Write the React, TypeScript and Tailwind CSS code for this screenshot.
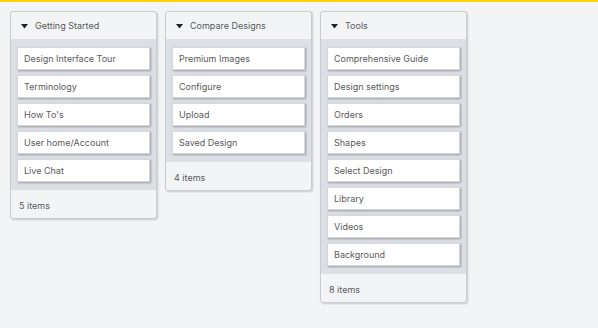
const groups = [
  {
    title: "Getting Started",
    items: ["Design Interface Tour", "Terminology", "How To's", "User home/Account", "Live Chat"],
  },
  {
    title: "Compare Designs",
    items: ["Premium Images", "Configure", "Upload", "Saved Design"],
  },
  {
    title: "Tools",
    items: [
      "Comprehensive Guide",
      "Design settings",
      "Orders",
      "Shapes",
      "Select Design",
      "Library",
      "Videos",
      "Background",
    ],
  },
];

const Caret = () => (
  <svg width="7" height="5" viewBox="0 0 7 5" className="shrink-0">
    <path d="M0 0 L7 0 L3.5 4.5 Z" fill="#222" />
  </svg>
);

const Group = ({ title, items }: { title: string; items: string[] }) => (
  <div className="w-[147px] rounded-[3px] border border-[#c9cdd2] bg-[#f3f4f6] shadow-[1px_1px_2px_rgba(0,0,0,0.18)] overflow-hidden">
    <div className="h-[27px] flex items-center gap-[7px] pl-[10px] pt-[1px] text-[9px] text-[#595959]">
      <Caret />
      <span>{title}</span>
    </div>
    <div className="bg-[#dcdfe3] px-[6px] pt-[8px] pb-[8px] flex flex-col gap-[5px]">
      {items.map((it) => (
        <div
          key={it}
          className="h-[23px] bg-white flex items-center pl-[6px] text-[9px] text-[#595959] shadow-[1px_1px_2px_rgba(0,0,0,0.3)] border border-[#d4d7db]"
        >
          {it}
        </div>
      ))}
    </div>
    <div className="h-[28px] flex items-center pl-[8px] pt-[3px] text-[9px] text-[#595959]">
      {items.length} items
    </div>
  </div>
);

export default function App() {
  return (
    <div className="w-[598px] h-[328px] bg-[#f3f4f6] border-t-2 border-[#ffd200]" style={{ fontFamily: "Inter, 'Noto Sans', sans-serif" }}>
      <div className="flex items-start gap-[8px] pl-[10px] pt-[9px]">
        {groups.map((g) => (
          <Group key={g.title} title={g.title} items={g.items} />
        ))}
      </div>
    </div>
  );
}
